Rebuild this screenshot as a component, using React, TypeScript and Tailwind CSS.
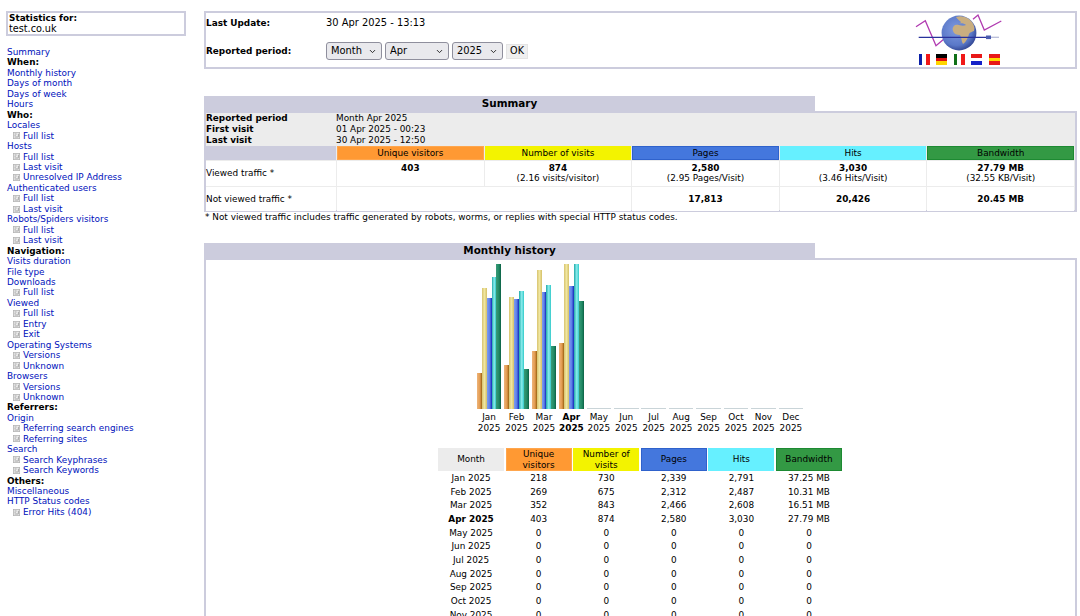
import React from 'react';
import { ChevronDown } from 'lucide-react';

const font = "[font-family:'DejaVu_Sans',Verdana,sans-serif]";

type Item = { label: string; kind?: 'head' | 'link' | 'sub' };

const menu: Item[] = [
  { label: 'Summary' },
  { label: 'When:', kind: 'head' },
  { label: 'Monthly history' },
  { label: 'Days of month' },
  { label: 'Days of week' },
  { label: 'Hours' },
  { label: 'Who:', kind: 'head' },
  { label: 'Locales' },
  { label: 'Full list', kind: 'sub' },
  { label: 'Hosts' },
  { label: 'Full list', kind: 'sub' },
  { label: 'Last visit', kind: 'sub' },
  { label: 'Unresolved IP Address', kind: 'sub' },
  { label: 'Authenticated users' },
  { label: 'Full list', kind: 'sub' },
  { label: 'Last visit', kind: 'sub' },
  { label: 'Robots/Spiders visitors' },
  { label: 'Full list', kind: 'sub' },
  { label: 'Last visit', kind: 'sub' },
  { label: 'Navigation:', kind: 'head' },
  { label: 'Visits duration' },
  { label: 'File type' },
  { label: 'Downloads' },
  { label: 'Full list', kind: 'sub' },
  { label: 'Viewed' },
  { label: 'Full list', kind: 'sub' },
  { label: 'Entry', kind: 'sub' },
  { label: 'Exit', kind: 'sub' },
  { label: 'Operating Systems' },
  { label: 'Versions', kind: 'sub' },
  { label: 'Unknown', kind: 'sub' },
  { label: 'Browsers' },
  { label: 'Versions', kind: 'sub' },
  { label: 'Unknown', kind: 'sub' },
  { label: 'Referrers:', kind: 'head' },
  { label: 'Origin' },
  { label: 'Referring search engines', kind: 'sub' },
  { label: 'Referring sites', kind: 'sub' },
  { label: 'Search' },
  { label: 'Search Keyphrases', kind: 'sub' },
  { label: 'Search Keywords', kind: 'sub' },
  { label: 'Others:', kind: 'head' },
  { label: 'Miscellaneous' },
  { label: 'HTTP Status codes' },
  { label: 'Error Hits (404)', kind: 'sub' },
];

const months = [
  { name: 'Jan', row: ['218', '730', '2,339', '2,791', '37.25 MB'], bars: [36, 121, 111, 132, 145] },
  { name: 'Feb', row: ['269', '675', '2,312', '2,487', '10.31 MB'], bars: [44, 112, 110, 118, 40] },
  { name: 'Mar', row: ['352', '843', '2,466', '2,608', '16.51 MB'], bars: [58, 139, 117, 124, 63] },
  { name: 'Apr', row: ['403', '874', '2,580', '3,030', '27.79 MB'], bars: [66, 145, 123, 145, 108], current: true },
  { name: 'May' },
  { name: 'Jun' },
  { name: 'Jul' },
  { name: 'Aug' },
  { name: 'Sep' },
  { name: 'Oct' },
  { name: 'Nov' },
  { name: 'Dec' },
];

const barColors = [
  'bg-[linear-gradient(90deg,#eeb47a,#e29a4e_60%,#98600f)]',
  'bg-[linear-gradient(90deg,#d8c470,#f0e6a0_50%,#d4c068)]',
  'bg-[linear-gradient(90deg,#7f9df0,#5c7fe8_55%,#1326b8)]',
  'bg-[linear-gradient(90deg,#22aaaa,#8ceeee_55%,#30c8c8)]',
  'bg-[linear-gradient(90deg,#3a9a78,#1f8a64_60%,#0c5f44)]',
];

const columns = [
  { label: 'Unique visitors', className: 'bg-[#ff9933] border-[#ffa64d]' },
  { label: 'Number of visits', className: 'bg-[#f3f300] border-[#f3f300]' },
  { label: 'Pages', className: 'bg-[#4477dd] border-[#2f62cc]' },
  { label: 'Hits', className: 'bg-[#66f0ff] border-[#66f0ff]' },
  { label: 'Bandwidth', className: 'bg-[#339944] border-[#1d8a32]' },
];

const SubIcon = () => (
  <svg width="7" height="7" viewBox="0 0 7 7" className="mr-[3px] shrink-0">
    <rect x="0.4" y="0.4" width="6.2" height="6.2" fill="#ececec" stroke="#b4b4b4" strokeWidth="0.8" />
    <path d="M1.6 2h2M1.6 3.5h1M1.6 5h3.8M5.4 1.8v3" stroke="#8a8a8a" strokeWidth="0.7" fill="none" />
  </svg>
);

const Flag = ({ stripes, vertical }: { stripes: string[]; vertical?: boolean }) => (
  <div className={`flex w-[11px] h-[11px] ${vertical ? 'flex-row' : 'flex-col'}`}>
    {stripes.map((c, i) => (
      <div key={i} className="flex-1" style={{ background: c }} />
    ))}
  </div>
);

const Logo = () => (
  <div className="flex flex-col items-center w-[90px]">
    <svg width="90" height="40" viewBox="0 0 90 40">
      <defs>
        <radialGradient id="globe" cx="42%" cy="40%" r="65%">
          <stop offset="0%" stopColor="#7f9ae0" />
          <stop offset="70%" stopColor="#5a78c8" />
          <stop offset="100%" stopColor="#2c3f8c" />
        </radialGradient>
      </defs>
      <polyline points="2,13.7 11.3,7.7 22,32.7 29.7,26.3" fill="none" stroke="#b03ab0" strokeWidth="1.3" />
      <polyline points="59,6.3 64,2 70.3,17 87.3,8" fill="none" stroke="#b03ab0" strokeWidth="1.3" />
      <circle cx="45" cy="20" r="17.4" fill="url(#globe)" />
      <path d="M42 4c6-2 12 0 16 5 2 3 3 6 2 9-2 1-4 1-5 3-1 4-3 8-6 10-2-3-1-6-3-9-3 0-6-1-7-4-1-3 0-4 2-6 3 0 5-1 6-3-2-2-4-3-5-5z" fill="#c9ae80" />
      <path d="M43 11c3-1 7-1 9 1-2 1-6 1-9-1z" fill="#6c88d0" />
      <path d="M4.7 24.3h68" stroke="#28329c" strokeWidth="1.3" />
      <rect x="72" y="22.5" width="5" height="3.6" fill="#4a5cb0" />
      <path d="M77 24.3h8" stroke="#b8bcd8" strokeWidth="1.3" />
    </svg>
    <div className="flex gap-[6.5px] mt-[1px]">
      <Flag vertical stripes={['#0a1fa8', '#ffffff', '#f01818']} />
      <Flag stripes={['#000000', '#e01010', '#ffd400']} />
      <Flag vertical stripes={['#107018', '#ffffff', '#f01818']} />
      <Flag stripes={['#e81818', '#ffffff', '#1420c8']} />
      <Flag stripes={['#e81818', '#ffd800', '#e81818']} />
    </div>
  </div>
);

const SectionTitle = ({ children }: { children: React.ReactNode }) => (
  <div className="w-[611px] h-[15px] bg-[#ccccdd] text-center font-bold text-[10.4px] leading-[15px]">{children}</div>
);

const Select = ({ value, options, className }: { value: string; options: string[]; className: string }) => (
  <div className={`relative h-[18px] ${className}`}>
    <select
      defaultValue={value}
      className={`w-full h-full appearance-none rounded-[3px] border border-[#8f8f9d] bg-[#e9e9ed] pl-[4px] text-[9.9px] text-black ${font}`}
    >
      {options.map((o) => (
        <option key={o}>{o}</option>
      ))}
    </select>
    <ChevronDown size={9} strokeWidth={2.5} className="absolute right-[5px] top-[5px] text-[#222]" />
  </div>
);

const App = () => {
  return (
    <div className={`flex h-[616px] overflow-hidden bg-white text-black text-[8.9px] leading-[10.45px] ${font}`}>
      <aside className="w-[204px] shrink-0 pt-[11px] pl-[6px]">
        <div className="w-[180px] h-[25px] border-2 border-[#ccccdd] pl-[1px]">
          <div className="font-bold leading-[10px]">Statistics for:</div>
          <div className="text-[9.7px] leading-[11px]">test.co.uk</div>
        </div>
        <nav className="mt-[11px] pl-px">
          {menu.map((m, i) =>
            m.kind === 'head' ? (
              <div key={i} className="font-bold">{m.label}</div>
            ) : m.kind === 'sub' ? (
              <div key={i} className="flex items-center pl-[6px] text-[#0011bb]"><SubIcon />{m.label}</div>
            ) : (
              <div key={i} className="text-[#0011bb]">{m.label}</div>
            ),
          )}
        </nav>
      </aside>

      <main className="w-[873px] shrink-0 pt-[11px]">
        <div className="h-[58px] border-2 border-[#ccccdd] flex justify-between pr-[71px]">
          <div className="font-bold">
            <div className="flex items-center h-[20px]">
              <span className="w-[120px]">Last Update:</span>
              <span className="font-normal text-[9.9px]">30 Apr 2025 - 13:13</span>
            </div>
            <div className="flex items-center h-[18px] mt-[9px]">
              <span className="w-[120px]">Reported period:</span>
              <div className="flex items-center gap-[3px] font-normal">
                <Select value="Month" options={['Month']} className="w-[56px]" />
                <Select value="Apr" options={['Apr']} className="w-[64px]" />
                <Select value="2025" options={['2025']} className="w-[51px]" />
                <button className="w-[22px] h-[15px] bg-[#efefef] border border-[#e4e4e4] text-[9.6px] leading-[12px]">OK</button>
              </div>
            </div>
          </div>
          <Logo />
        </div>

        <div className="mt-[27px]">
          <SectionTitle>Summary</SectionTitle>
          <div className="border-2 border-[#ccccdd] bg-[#ececec] h-[101px]">
            <div className="grid grid-cols-[130px_1fr] h-[33px] leading-[11px]">
              <b>Reported period</b><span>Month Apr 2025</span>
              <b>First visit</b><span>01 Apr 2025 - 00:23</span>
              <b>Last visit</b><span>30 Apr 2025 - 12:50</span>
            </div>
            <div className="grid grid-cols-[130px_repeat(5,1fr)] gap-px mr-px">
              <div className="h-[14px] bg-[#ccccdd]" />
              {columns.map((c) => (
                <div key={c.label} className={`h-[14px] border text-center leading-[12px] ${c.className}`}>{c.label}</div>
              ))}
              <div className="bg-white h-[25px] flex items-center">Viewed traffic *</div>
              <div className="bg-white text-center pt-[2px]"><b>403</b></div>
              <div className="bg-white text-center pt-[2px]"><b>874</b><br />(2.16 visits/visitor)</div>
              <div className="bg-white text-center pt-[2px]"><b>2,580</b><br />(2.95 Pages/Visit)</div>
              <div className="bg-white text-center pt-[2px]"><b>3,030</b><br />(3.46 Hits/Visit)</div>
              <div className="bg-white text-center pt-[2px]"><b>27.79 MB</b><br />(32.55 KB/Visit)</div>
              <div className="bg-white h-[24px] flex items-center">Not viewed traffic *</div>
              <div className="bg-white col-span-2" />
              <div className="bg-white flex items-center justify-center font-bold">17,813</div>
              <div className="bg-white flex items-center justify-center font-bold">20,426</div>
              <div className="bg-white flex items-center justify-center font-bold">20.45 MB</div>
            </div>
          </div>
          <div className="pl-px leading-[11px]">* Not viewed traffic includes traffic generated by robots, worms, or replies with special HTTP status codes.</div>
        </div>

        <div className="mt-[20px]">
          <SectionTitle>Monthly history</SectionTitle>
          <div className="border-2 border-[#ccccdd] h-[400px] flex flex-col items-center">
            <div className="flex mt-[4px] ml-[-1px]">
              {months.map((m) => (
                <div key={m.name} className={`w-[27.45px] flex flex-col items-center ${m.current ? 'font-bold' : ''}`}>
                  <div className="h-[145px] w-[24.5px] flex items-end">
                    {(m.bars ?? [0, 0, 0, 0, 0]).map((h, i) => (
                      <div key={i} className={`flex-1 ${h ? barColors[i] : 'bg-[#c9d4d8]'}`} style={{ height: Math.max(h, 1) }} />
                    ))}
                  </div>
                  <div className="mt-[3px] text-center leading-[11px]">{m.name}<br />2025</div>
                </div>
              ))}
            </div>
            <div className="mt-[14px] w-[404px] grid grid-cols-6 gap-x-[1.5px] ml-[-1px]">
              <div className="h-[23px] bg-[#ececec] flex items-center justify-center">Month</div>
              {columns.map((c) => (
                <div key={c.label} className={`h-[23px] border flex items-center justify-center text-center leading-[10.4px] px-[2px] ${c.className}`}>
                  {c.label === 'Unique visitors' ? <span>Unique<br />visitors</span> : c.label}
                </div>
              ))}
              <div className="col-span-6 h-px" />
              {months.map((m) => (
                <React.Fragment key={m.name}>
                  <div className={`h-[13.67px] leading-[13.67px] text-center ${m.current ? 'font-bold' : ''}`}>{m.name} 2025</div>
                  {(m.row ?? ['0', '0', '0', '0', '0']).map((v, i) => (
                    <div key={i} className="h-[13.67px] leading-[13.67px] text-center">{v}</div>
                  ))}
                </React.Fragment>
              ))}
            </div>
          </div>
        </div>
      </main>
    </div>
  );
};

export default App;
